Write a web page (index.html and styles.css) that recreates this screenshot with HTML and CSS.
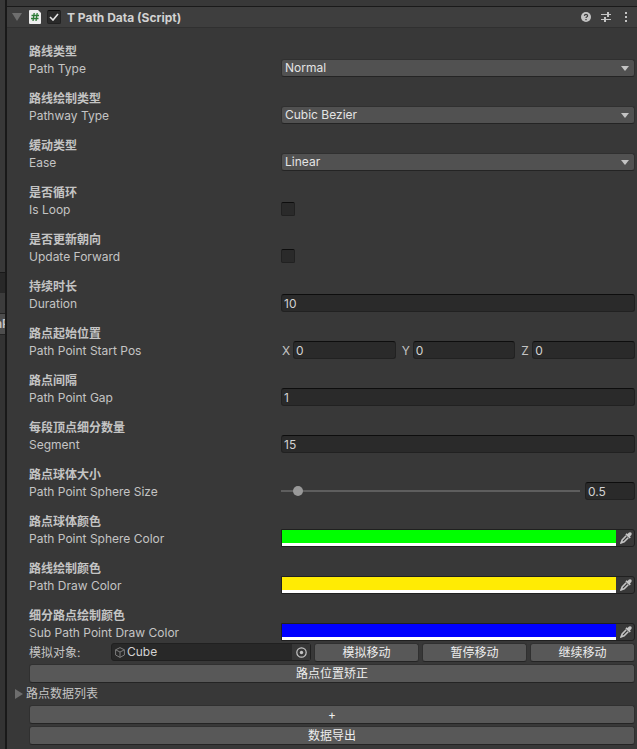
FILE: index.html
```
<!DOCTYPE html>
<html lang="zh-CN">
<head>
<meta charset="utf-8">
<title>T Path Data (Script)</title>
<link rel="stylesheet" href="styles.css">
</head>
<body>
<svg width="0" height="0" class="defs" aria-hidden="true">
  <symbol id="dropper" viewBox="0 0 12 12">
    <path d="M7.500 2 9 .6Q10.300 0 11.400.7 12 1.800 11.400 3L10 4.500l.8.900-1.200 1.200L5.400 2.400l1.200-1.200z"/>
    <path d="M6.200 3.800 2.200 7.900 1.200 10.800 4.100 9.800 8.200 5.800" fill="none" stroke="currentColor" stroke-width="1.600"/>
    <path d="M.4 11.600 1.200 8.800l2 2z"/>
  </symbol>
</svg>
<div class="window">
  <aside class="neighbor">
    <div class="neighbor-body"></div>
    <div class="neighbor-tabs"></div>
    <div class="neighbor-tools"></div>
    <div class="neighbor-item"><span>aP</span></div>
    <div class="neighbor-rest"></div>
  </aside>
  <main class="inspector">
    <header class="head">
      <button class="fold" aria-label="Collapse"><svg width="10" height="8" viewBox="0 0 10 8"><path d="M0 0h10L5 8z"/></svg></button>
      <svg class="script" width="12" height="14" viewBox="0 0 12 14"><path d="M1 0h8l3 3v10q0 1-1 1H1q-1 0-1-1V1q0-1 1-1z" fill="#efefef"/><path d="M5.200 3 4 11M8.200 3 7 11M2.500 5.500h7.500M2 8.500h7.500" stroke="#2c7a35" stroke-width="1.300" fill="none"/></svg>
      <input class="check" type="checkbox" checked aria-label="Enabled">
      <h1>T Path Data (Script)</h1>
      <button class="tool" aria-label="Help"><svg width="10" height="10" viewBox="0 0 10 10"><circle cx="5" cy="5" r="5"/><path d="M3.400 3.900Q3.500 2.300 5 2.300t1.600 1.400Q6.600 4.500 5.600 5 5 5.300 5 6.100M5 7v1.200" stroke="#3e3e3e" stroke-width="1.300" fill="none"/></svg></button>
      <button class="tool" aria-label="Presets"><svg width="10" height="10" viewBox="0 0 10 10"><path d="M0 2h6v1H0zM6 0h2v2h2v1H8v2H6zM0 7h3V5h2v2h5v1H5v2H3V8H0z"/></svg></button>
      <button class="tool" aria-label="More"><svg width="10" height="10" viewBox="0 0 10 10"><path d="M4 0h2v2H4zM4 4h2v2H4zM4 8h2v2H4z"/></svg></button>
    </header>
    <section class="body">
      <div class="prop"><h2>路线类型</h2><div class="row"><label for="type">Path Type</label><select id="type"><option>Normal</option></select></div></div>
      <div class="prop"><h2>路线绘制类型</h2><div class="row"><label for="pathway">Pathway Type</label><select id="pathway"><option>Cubic Bezier</option></select></div></div>
      <div class="prop"><h2>缓动类型</h2><div class="row"><label for="ease">Ease</label><select id="ease"><option>Linear</option></select></div></div>
      <div class="prop"><h2>是否循环</h2><div class="row"><label for="loop">Is Loop</label><input class="check" id="loop" type="checkbox"></div></div>
      <div class="prop"><h2>是否更新朝向</h2><div class="row"><label for="forward">Update Forward</label><input class="check" id="forward" type="checkbox"></div></div>
      <div class="prop"><h2>持续时长</h2><div class="row"><label for="duration">Duration</label><input class="text" id="duration" type="text" value="10"></div></div>
      <div class="prop"><h2>路点起始位置</h2><div class="row"><span>Path Point Start Pos</span>
        <div class="vector">
          <div class="axis"><label for="x">X</label><input class="text" id="x" type="text" value="0"></div>
          <div class="axis"><label for="y">Y</label><input class="text" id="y" type="text" value="0"></div>
          <div class="axis"><label for="z">Z</label><input class="text" id="z" type="text" value="0"></div>
        </div></div></div>
      <div class="prop"><h2>路点间隔</h2><div class="row"><label for="gap">Path Point Gap</label><input class="text" id="gap" type="text" value="1"></div></div>
      <div class="prop"><h2>每段顶点细分数量</h2><div class="row"><label for="segment">Segment</label><input class="text" id="segment" type="text" value="15"></div></div>
      <div class="prop"><h2>路点球体大小</h2><div class="row"><label for="size">Path Point Sphere Size</label>
        <div class="slider"><input id="size" type="range" min="0.1" max="10" step="0.1" value="0.5"><input class="text" type="text" value="0.5" aria-label="Path Point Sphere Size value"></div></div></div>
      <div class="prop"><h2>路点球体颜色</h2><div class="row"><label for="c1">Path Point Sphere Color</label>
        <div class="color"><input id="c1" type="color" value="#00ff00"><button aria-label="Pick color"><svg width="12" height="12"><use href="#dropper"/></svg></button></div></div></div>
      <div class="prop"><h2>路线绘制颜色</h2><div class="row"><label for="c2">Path Draw Color</label>
        <div class="color"><input id="c2" type="color" value="#ffeb04"><button aria-label="Pick color"><svg width="12" height="12"><use href="#dropper"/></svg></button></div></div></div>
      <div class="prop"><h2>细分路点绘制颜色</h2><div class="row"><label for="c3">Sub Path Point Draw Color</label>
        <div class="color"><input id="c3" type="color" value="#0000ff"><button aria-label="Pick color"><svg width="12" height="12"><use href="#dropper"/></svg></button></div></div></div>
      <div class="actions">
        <div class="simulate">
          <label for="target">模拟对象:</label>
          <div class="object">
            <svg width="10" height="11" viewBox="0 0 10 11"><path d="M5 .6 9.400 2.800v5.200L5 10.400.6 8V2.800zM.6 2.800 5 5l4.400-2.200M5 5v5.400" fill="none" stroke="#7d7d7d"/></svg>
            <input id="target" type="text" value="Cube" readonly>
            <button aria-label="Select object"><svg width="11" height="11" viewBox="0 0 11 11"><circle cx="5.500" cy="5.500" r="4.700" fill="none" stroke="currentColor" stroke-width="1.200"/><circle cx="5.500" cy="5.500" r="1.700"/></svg></button>
          </div>
          <button class="btn">模拟移动</button>
          <button class="btn">暂停移动</button>
          <button class="btn">继续移动</button>
        </div>
        <button class="btn">路点位置矫正</button>
        <button class="foldout"><svg width="8" height="10" viewBox="0 0 8 10"><path d="M0 0v10l8-5z"/></svg>路点数据列表</button>
        <button class="btn">+</button>
        <button class="btn">数据导出</button>
      </div>
    </section>
  </main>
</div>
</body>
</html>
```
FILE: styles.css
```
* { box-sizing: border-box; }

body {
  margin: 0;
  background: #383838;
  color: #c4c4c4;
  font: 12px/18px Inter, "Noto Sans CJK SC", sans-serif;
}

button, input, select {
  margin: 0;
  padding: 0;
  border: 0;
  background: none;
  color: inherit;
  font: inherit;
}

svg { display: block; fill: currentColor; }
.defs { position: absolute; }

.window { display: flex; min-height: 100vh; }

.neighbor {
  display: flex;
  flex-direction: column;
  flex: none;
  width: 7px;
  border-right: 2px solid #191919;
  overflow: hidden;
}
.neighbor-body { height: 272px; }
.neighbor-tabs { height: 21px; border-top: 1px solid #191919; background: #282828; }
.neighbor-tools { height: 20px; background: #3c3c3c; }
.neighbor-item {
  display: flex;
  justify-content: center;
  height: 22px;
  border: solid #232323;
  border-width: 1px 0;
  background: #4d4d4d;
  font-weight: 600;
  line-height: 20px;
}
.neighbor-rest { flex: 1; background: #333; }

.inspector { flex: 1; min-width: 0; padding-top: 6px; }

.head {
  display: flex;
  align-items: center;
  height: 22px;
  padding: 0 6px 0 5px;
  border: solid #1a1a1a;
  border-width: 1px 0;
  border-bottom-color: #303030;
  background: #3e3e3e;
}
.fold { color: #6e6e6e; }
.script { margin: 0 6px 0 7px; }
h1 { flex: 1; margin: 0 0 0 6px; padding-top: 2px; font-size: 12px; font-weight: 700; line-height: 18px; color: #d2d2d2; }
.tool { margin-left: 10px; }

.check {
  appearance: none;
  width: 14px;
  height: 14px;
  border: 1px solid #212121;
  border-top-color: #0d0d0d;
  border-radius: 2px;
  background: #2a2a2a;
}
.check:checked {
  background: #2a2a2a url("data:image/svg+xml,%3Csvg xmlns='http://www.w3.org/2000/svg' width='10' height='8'%3E%3Cpath d='M1 4l3 3 5-6' fill='none' stroke='%23e6e6e6' stroke-width='1.600'/%3E%3C/svg%3E") no-repeat center;
}

.body { padding: 2px 2px 4px 22px; }
.prop { padding-top: 15px; }
h2 { margin: 0; font-size: 12px; font-weight: 700; line-height: 14px; }
.row { display: grid; grid-template: 18px / 252px 1fr; align-items: center; }
.row label, .row span { align-self: start; line-height: 20px; }

.text {
  width: 100%;
  min-width: 0;
  height: 18px;
  padding: 1px 2px 0;
  border: 1px solid #212121;
  border-top-color: #0d0d0d;
  border-radius: 3px;
  background: #2a2a2a;
  color: #d2d2d2;
}

select {
  appearance: none;
  width: 100%;
  height: 18px;
  padding: 0 3px;
  border: 1px solid #303030;
  border-bottom-color: #242424;
  border-radius: 3px;
  background: #515151 url("data:image/svg+xml,%3Csvg xmlns='http://www.w3.org/2000/svg' width='8' height='5'%3E%3Cpath d='M0 0h8L4 5z' fill='%23c4c4c4'/%3E%3C/svg%3E") no-repeat right 5px center;
  color: #e4e4e4;
  line-height: 16px;
}

.vector { display: flex; gap: 5px; height: 18px; }
.axis { display: flex; flex: 1; min-width: 0; }
.axis label { flex: none; width: 12px; padding-left: 1px; }

.slider { display: grid; grid-template-columns: 1fr 50px; gap: 5px; align-items: center; }
.slider input[type="range"] { appearance: none; width: 100%; min-width: 0; height: 18px; }
.slider input::-webkit-slider-runnable-track { height: 2px; background: #5e5e5e; }
.slider input::-webkit-slider-thumb {
  appearance: none;
  width: 10px;
  height: 10px;
  margin-top: -4px;
  border-radius: 50%;
  background: #999;
}

.color {
  display: flex;
  height: 18px;
  border: 1px solid #202020;
  border-radius: 0 3px 3px 0;
}
.color input { flex: 1; min-width: 0; height: 16px; border-bottom: 3px solid #fff; }
.color input::-webkit-color-swatch-wrapper { padding: 0; }
.color input::-webkit-color-swatch { border: 0; border-radius: 0; }
.color button { display: grid; place-items: center; width: 18px; padding-left: 2px; }

.actions { display: grid; gap: 2px; padding-top: 2px; }
.simulate {
  display: grid;
  grid-template: 19px / 79px minmax(0, 200fr) repeat(3, minmax(0, 105fr));
  gap: 3px;
}
.simulate label { line-height: 20px; }
.object {
  display: flex;
  align-items: center;
  height: 18px;
  padding-left: 3px;
  border: 1px solid #202020;
  border-radius: 3px;
  background: #282828;
}
.object input { flex: 1; min-width: 0; padding-left: 2px; color: #d2d2d2; line-height: 16px; }
.object button { display: grid; place-items: center; width: 18px; height: 16px; background: #373737; }

.btn {
  height: 19px;
  border: 1px solid #303030;
  border-bottom-color: #242424;
  border-radius: 3px;
  background: #585858;
  color: #eee;
  line-height: 17px;
}
.foldout { display: flex; align-items: center; gap: 3px; height: 18px; margin-left: -14px; line-height: 20px; }
.foldout svg { color: #6e6e6e; }
```
